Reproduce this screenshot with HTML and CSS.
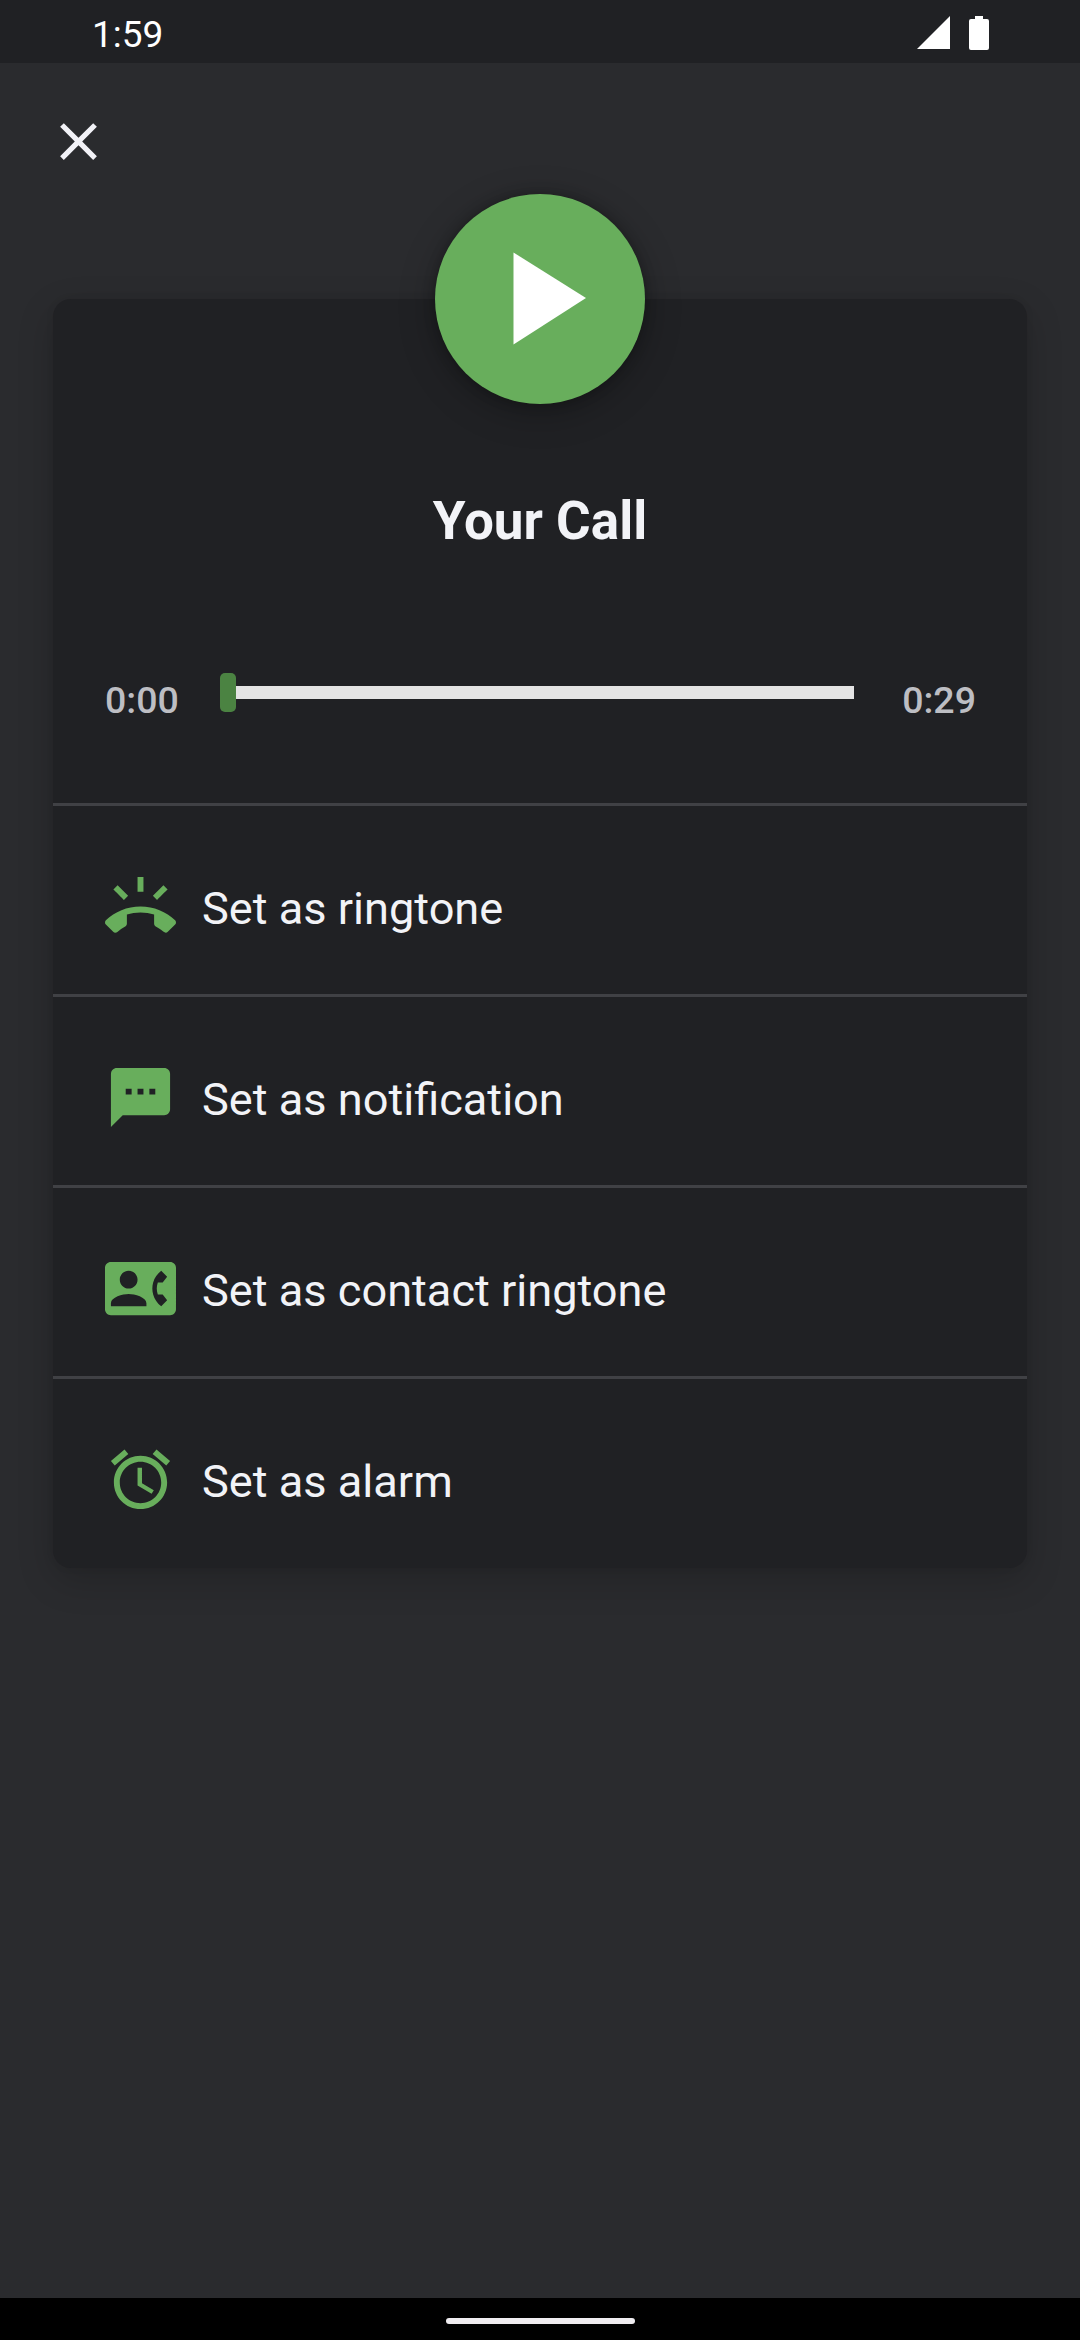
FILE: index.html
```html
<!DOCTYPE html>
<html lang="en">
<head>
<meta charset="utf-8">
<title>Your Call</title>
<link rel="stylesheet" href="styles.css">
</head>
<body>
<div class="screen">
  <header class="status-bar">
    <span class="clock">1:59</span>
    <div class="status-icons">
      <svg class="signal" viewBox="0 0 33 33"><path d="M33 0v33H0z"/></svg>
      <svg class="battery" viewBox="0 0 20 34"><path d="M6 0h8v3h4a2 2 0 0 1 2 2v27a2 2 0 0 1-2 2H2a2 2 0 0 1-2-2V5a2 2 0 0 1 2-2h4z"/></svg>
    </div>
  </header>
  <main class="content">
    <button class="close" aria-label="Close">
      <svg viewBox="0 0 24 24"><path d="M19 6.41L17.59 5 12 10.59 6.41 5 5 6.41 10.59 12 5 17.59 6.41 19 12 13.41 17.59 19 19 17.59 13.41 12z"/></svg>
    </button>
    <section class="card">
      <div class="player">
        <button class="play" aria-label="Play">
          <svg viewBox="0 0 210 210"><path d="M78.500 58.500v92L151 104z"/></svg>
        </button>
        <h1 class="title">Your Call</h1>
        <div class="progress">
          <span class="time">0:00</span>
          <div class="slider"><span class="thumb"></span><span class="track"></span></div>
          <span class="time">0:29</span>
        </div>
      </div>
      <div class="action">
        <svg viewBox="0 0 24 24"><path d="M23.710 16.670C20.660 13.780 16.540 12 12 12 7.460 12 3.340 13.780.29 16.670c-.18.18-.29.43-.29.71 0 .28.11.53.29.71l2.480 2.480c.18.18.43.29.71.29.27 0 .52-.11.7-.28.79-.74 1.690-1.360 2.660-1.850.33-.16.56-.5.56-.9v-3.100c1.450-.48 3-.73 4.600-.73s3.150.25 4.600.72v3.100c0 .39.23.74.56.9.98.49 1.870 1.120 2.660 1.850.18.18.43.28.7.28.28 0 .53-.11.71-.29l2.480-2.480c.18-.18.29-.43.29-.71 0-.27-.11-.52-.29-.7zM21.160 6.260l-1.410-1.410-3.560 3.550 1.410 1.410s3.450-3.520 3.560-3.550zM13 2h-2v5h2V2zM6.400 9.810L7.810 8.400 4.260 4.840 2.840 6.260c.11.03 3.560 3.550 3.560 3.550z"/></svg>
        <span>Set as ringtone</span>
      </div>
      <div class="action">
        <svg viewBox="0 0 24 24"><path d="M20 2H4c-1.100 0-1.990.9-1.990 2L2 22l4-4h14c1.100 0 2-.9 2-2V4c0-1.100-.9-2-2-2zM9 11H7V9h2v2zm4 0h-2V9h2v2zm4 0h-2V9h2v2z"/></svg>
        <span>Set as notification</span>
      </div>
      <div class="action">
        <svg viewBox="0 0 24 24"><path d="M22 3H2C.9 3 0 3.900 0 5v14c0 1.100.9 2 2 2h20c1.100 0 1.990-.9 1.990-2L24 5c0-1.100-.9-2-2-2zM8 6c1.660 0 3 1.340 3 3s-1.340 3-3 3-3-1.340-3-3 1.340-3 3-3zm6 12H2v-1c0-2 4-3.100 6-3.100s6 1.100 6 3.100v1zm3.850-4h1.640L21 16l-1.990 1.990c-1.310-.98-2.280-2.380-2.730-3.990-.18-.64-.28-1.310-.28-2s.1-1.360.28-2c.45-1.620 1.420-3.010 2.730-3.990L21 8l-1.510 2h-1.640c-.22.63-.35 1.300-.35 2s.13 1.370.35 2z"/></svg>
        <span>Set as contact ringtone</span>
      </div>
      <div class="action">
        <svg viewBox="0 0 24 24"><path d="M22 5.720l-4.600-3.860-1.290 1.530 4.600 3.860L22 5.720zM7.880 3.390L6.600 1.860 2 5.710l1.290 1.530 4.590-3.850zM12.500 8H11v6l4.750 2.850.75-1.230-4-2.370V8zM12 4c-4.970 0-9 4.030-9 9s4.020 9 9 9c4.970 0 9-4.030 9-9s-4.030-9-9-9zm0 16c-3.870 0-7-3.130-7-7s3.130-7 7-7 7 3.130 7 7-3.130 7-7 7z"/></svg>
        <span>Set as alarm</span>
      </div>
    </section>
  </main>
  <footer class="nav-bar"><span class="home-pill"></span></footer>
</div>
</body>
</html>
```
FILE: styles.css
```css
* {
  box-sizing: border-box;
}

body {
  margin: 0;
  background: #2a2b2e;
  font-family: Roboto, "Liberation Sans", sans-serif;
  color: #f2f3f7;
}

button {
  padding: 0;
  border: 0;
  background: none;
}

svg {
  display: block;
  fill: currentColor;
}

.screen {
  display: flex;
  flex-direction: column;
  width: 1080px;
  height: 2340px;
}

.status-bar {
  display: flex;
  justify-content: space-between;
  height: 63px;
  padding: 0 91px 0 92px;
  background: #202124;
  color: #fff;
}

.clock {
  font-size: 37px;
  line-height: 69px;
}

.status-icons {
  display: flex;
  gap: 19px;
  padding-top: 16px;
}

.signal {
  width: 33px;
  height: 33px;
}

.battery {
  width: 20px;
  height: 34px;
}

.content {
  flex: 1;
  padding: 47px 53px 0;
}

.close {
  display: block;
  width: 63px;
  height: 63px;
  margin-left: -6px;
  color: #f2f2f7;
}

.card {
  margin-top: 126px;
  height: 1269px;
  border-radius: 18px;
  background: #202124;
  box-shadow: 0 12px 36px rgba(0, 0, 0, 0.18), 0 0 8px rgba(0, 0, 0, 0.06);
}

.player {
  display: flex;
  flex-direction: column;
  align-items: center;
  height: 504px;
}

.play {
  width: 210px;
  height: 210px;
  margin-top: -105px;
  border-radius: 50%;
  background: #68ae5c;
  color: #fff;
  box-shadow: 0 8px 36px rgba(0, 0, 0, 0.28), 0 0 12px rgba(0, 0, 0, 0.25);
}

.title {
  margin: 84px 0 0;
  font-size: 53px;
  font-weight: 700;
  line-height: 66px;
}

.progress {
  display: grid;
  grid-template-columns: 115px 634px 1fr;
  align-self: stretch;
  margin-top: 119px;
  padding: 0 51px 0 52px;
}

.time {
  padding-top: 5px;
  color: #bdbec3;
  font-size: 37.5px;
  font-weight: 500;
  line-height: 44px;
}

.time:last-child {
  text-align: right;
}

.slider {
  display: flex;
  align-items: center;
  width: 634px;
  height: 39px;
}

.thumb {
  width: 16px;
  height: 39px;
  border-radius: 5px;
  background: #4b8342;
}

.track {
  flex: 1;
  height: 13px;
  background: #e4e4e4;
}

.action {
  display: flex;
  align-items: center;
  gap: 26px;
  height: 191px;
  padding: 12px 52px 0;
  border-top: 3px solid #404145;
  font-size: 45.15px;
}

.action span {
  padding-top: 5px;
}

.action svg {
  width: 71px;
  height: 71px;
  color: #68ae5c;
}

.nav-bar {
  display: flex;
  justify-content: center;
  height: 42px;
  padding-top: 20px;
  background: #000;
}

.home-pill {
  width: 189px;
  height: 6px;
  border-radius: 3px;
  background: #efecf0;
}
```
